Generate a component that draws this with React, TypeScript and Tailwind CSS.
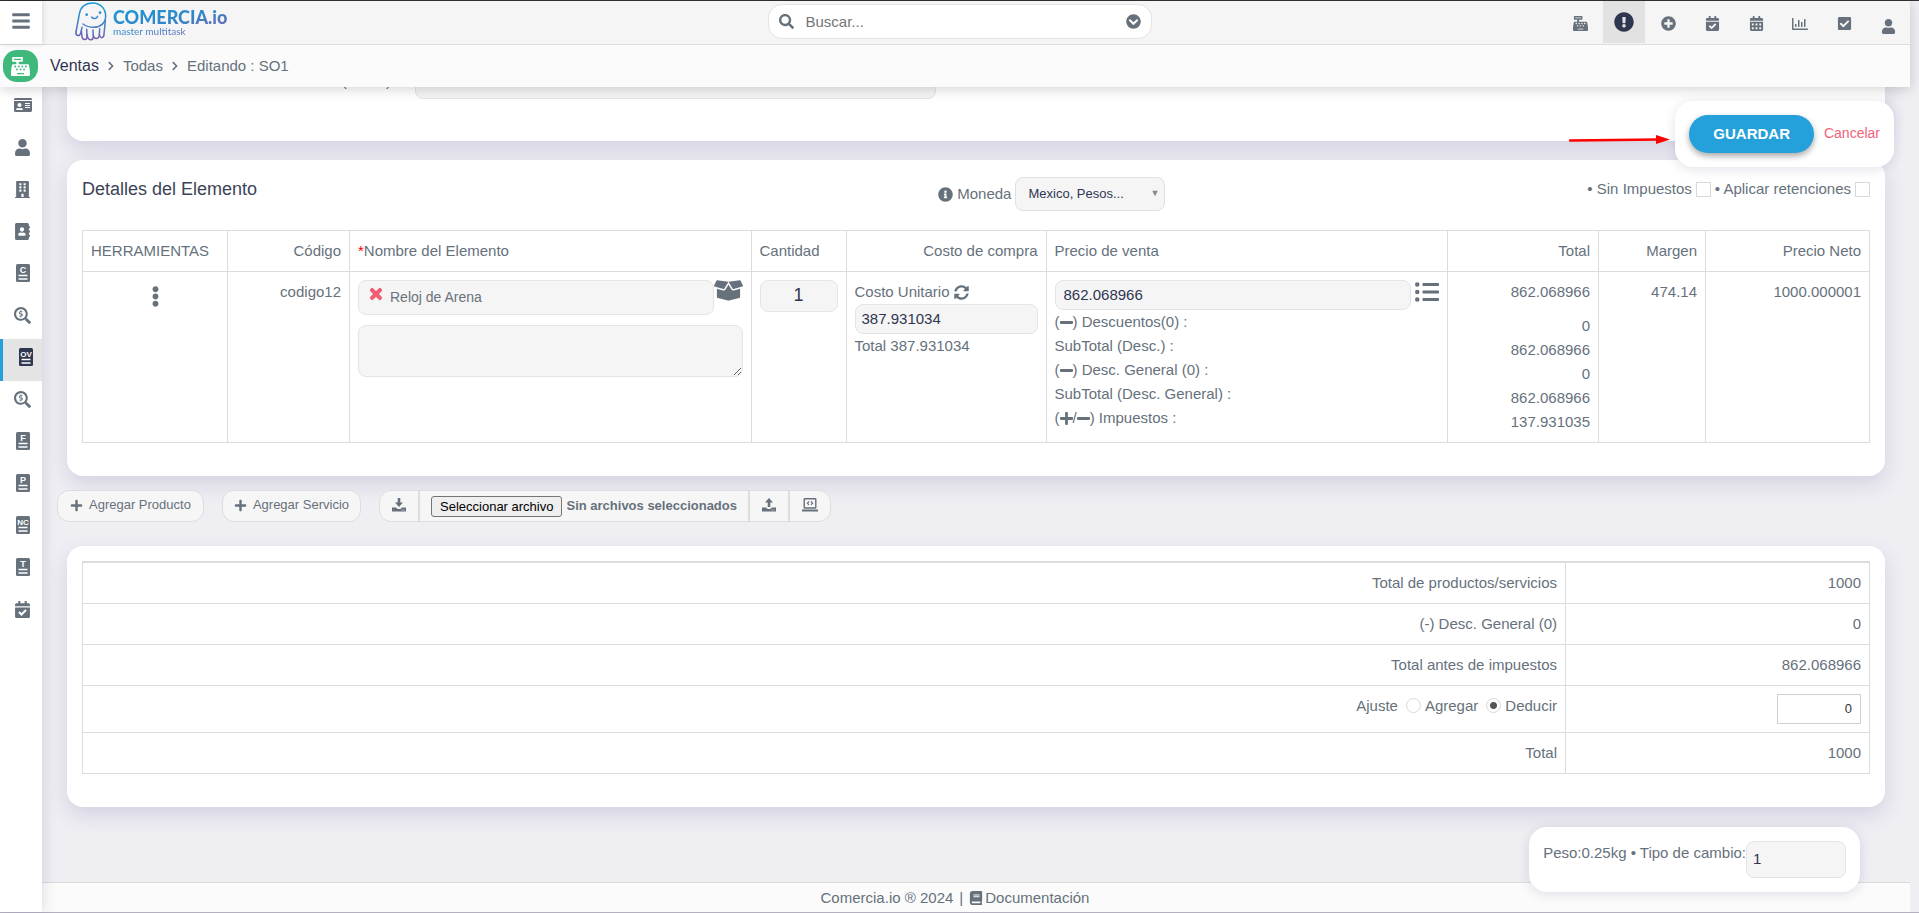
import React from "react";
import {
  FaAddressBook,
  FaBars,
  FaBook,
  FaBoxOpen,
  FaBuilding,
  FaCalendarAlt,
  FaCalendarCheck,
  FaCashRegister,
  FaCheckSquare,
  FaChevronCircleDown,
  FaChevronRight,
  FaEllipsisV,
  FaExclamationCircle,
  FaIdCard,
  FaInfoCircle,
  FaListUl,
  FaMinus,
  FaPlus,
  FaPlusCircle,
  FaRegChartBar,
  FaSearch,
  FaSearchDollar,
  FaSyncAlt,
  FaTimes,
  FaUser,
} from "react-icons/fa";

const field = "rounded-lg border border-[#e4e4e4] bg-[#f5f5f5] pb-0.5 text-[#2f3650] outline-none";
const card = "rounded-2xl bg-white shadow-[0_8px_20px_rgba(80,70,130,0.17)]";
const cell = "border border-[#dcdcdc] p-2 align-top font-normal";
const toolButton =
  "flex h-8 items-center border border-[#dddddd] bg-[#f6f6f6] text-[13px] text-[#66717c]";

const DocIcon = ({ text }: { text: string }) => (
  <svg width="14" height="18" viewBox="0 0 14 18" aria-hidden="true">
    <rect width="14" height="18" rx="1.5" fill="currentColor" />
    <text
      x="7"
      y="9"
      textAnchor="middle"
      fontFamily="Liberation Sans, Arial, sans-serif"
      fontWeight="700"
      fontSize={text.length > 1 ? 8 : 9}
      fill="#fff"
    >
      {text}
    </text>
    <path d="M2.5 11.5h9M2.5 15h9" stroke="#fff" strokeWidth="1.5" />
  </svg>
);

const TrayIcon = ({ up }: { up?: boolean }) => (
  <svg width="14" height="14" viewBox="0 0 14 14" fill="currentColor" aria-hidden="true">
    {up ? <path d="M7 0l4 4.6H8.3V9H5.7V4.6H3z" /> : <path d="M5.7 0h2.6v4.4H11L7 9 3 4.4h2.7z" />}
    <path d="M0 9.500h4.200C4.800 10.600 5.800 11 7 11s2.200-.4 2.800-1.500H14V13.500H0z" />
    <path d="M9.500 12h1M11.500 12h1" stroke="#fff" strokeWidth="0.800" />
  </svg>
);

const LaptopIcon = () => (
  <svg width="16" height="14" viewBox="0 0 16 14" fill="none" stroke="currentColor" aria-hidden="true">
    <rect x="2.200" y="0.800" width="11.600" height="9.200" rx="0.500" strokeWidth="1.400" />
    <path d="M7 3.500L5.400 5.200 7 6.900M9 3.500l1.600 1.700L9 6.900" strokeWidth="1.200" />
    <path d="M0 12.500h16" strokeWidth="2" />
  </svg>
);

const Logo = () => (
  <a href="#" className="mb-0.5 ml-8 flex items-center gap-1.5" aria-label="Comercia.io">
    <svg width="33" height="41" viewBox="41 5 99 123" fill="none" aria-hidden="true">
      <defs>
        <linearGradient id="ink" x1="0" y1="5" x2="0" y2="125" gradientUnits="userSpaceOnUse">
          <stop offset="0" stopColor="#12a0dc" />
          <stop offset="0.5" stopColor="#3a86cc" />
          <stop offset="1" stopColor="#7a5db0" />
        </linearGradient>
      </defs>
      <g stroke="url(#ink)" strokeWidth="4.500" strokeLinecap="round" strokeLinejoin="round">
        <path d="M47 98L57 44C61 22 76 11 97 11c23 0 39 17 39 39 0 22-16 34-36 34-14 0-24-4-32-10" />
        <path d="M47 98c-2 12 11 14 14 4l4-18" />
        <path d="M63 94l2 18c2 12 15 11 15 0l-1-22" />
        <path d="M80 106l3 10c4 8 15 8 16-4l-1-20" />
        <path d="M99 108c3 14 15 12 18 0l1-20" />
        <path d="M117 106c4 14 14 10 14-2l4-40" />
        <path d="M94 53c5 7 15 6 18-2" />
      </g>
      <circle cx="79" cy="46" r="4" fill="#2a8fd2" />
      <circle cx="119" cy="40" r="4" fill="#2a8fd2" />
    </svg>
    <span className="flex flex-col bg-linear-to-br from-[#0f9ad8] via-[#2f85c8] to-[#7558ae] bg-clip-text font-[Lato,sans-serif] text-transparent">
      <span className="text-[18px] leading-[18px] font-black">COMERCIA.io</span>
      <span className="text-[10px] leading-2.5">master multitask</span>
    </span>
  </a>
);

const topLinks = [
  { label: "Punto de venta", icon: <FaCashRegister size={15} /> },
  { label: "Avisos", icon: <FaExclamationCircle size={20} />, active: true },
  { label: "Nuevo", icon: <FaPlusCircle size={15} /> },
  { label: "Agenda", icon: <FaCalendarCheck size={15} /> },
  { label: "Calendario", icon: <FaCalendarAlt size={15} /> },
  { label: "Reportes", icon: <FaRegChartBar size={16} /> },
  { label: "Tareas", icon: <FaCheckSquare size={15} /> },
  { label: "Usuario", icon: <FaUser size={15} className="mt-1.5" /> },
];

const sideLinks = [
  { label: "Tarjetas", icon: <FaIdCard size={18} /> },
  { label: "Usuarios", icon: <FaUser size={17} /> },
  { label: "Empresas", icon: <FaBuilding size={17} /> },
  { label: "Contactos", icon: <FaAddressBook size={17} /> },
  { label: "Cotizaciones", icon: <DocIcon text="C" /> },
  { label: "Buscar cotización", icon: <FaSearchDollar size={17} /> },
  { label: "Ventas", icon: <DocIcon text="OV" />, active: true },
  { label: "Buscar venta", icon: <FaSearchDollar size={17} /> },
  { label: "Facturas", icon: <DocIcon text="F" /> },
  { label: "Pagos", icon: <DocIcon text="P" /> },
  { label: "Notas", icon: <DocIcon text="NC" /> },
  { label: "Tickets", icon: <DocIcon text="T" /> },
  { label: "Agenda", icon: <FaCalendarCheck size={17} /> },
];

const Header = () => (
  <header className="relative z-20 bg-[#fbfbfb] shadow-[0_2px_12px_rgba(0,0,0,0.18)]">
    <div className="flex h-11 items-center border-b border-[#dddddd] bg-[#f5f5f5]">
      <button
        aria-label="Menú"
        className="flex w-[42px] items-center justify-center self-stretch bg-white pb-1 shadow-[1px_0_5px_rgba(0,0,0,0.12)]"
      >
        <FaBars size={20} />
      </button>
      <div className="flex flex-22">
        <Logo />
      </div>
      <label className="mb-0.5 flex h-[35px] w-96 items-center gap-3 rounded-[14px] border border-[#e4e4e4] bg-white px-2.5">
        <FaSearch size={15} />
        <input
          type="text"
          aria-label="Buscar"
          placeholder="Buscar..."
          className="min-w-0 flex-1 text-[15px] outline-none placeholder:text-[#757575]"
        />
        <FaChevronCircleDown size={15} />
      </label>
      <nav className="flex flex-23 justify-end self-stretch">
        {topLinks.map((link) => (
          <a
            key={link.label}
            href="#"
            aria-label={link.label}
            className={
              link.active
                ? "mx-px mb-px flex w-[42px] items-center justify-center bg-[#e2e2e2] text-[#2f3650]"
                : "mx-px flex w-[42px] items-center justify-center pt-0.5"
            }
          >
            {link.icon}
          </a>
        ))}
      </nav>
    </div>
    <nav className="flex h-[42px] items-center pl-[3px]">
      <span className="flex h-8 w-[35px] items-center justify-center rounded-[14px] bg-[#3fb97b] text-white">
        <FaCashRegister size={19} />
      </span>
      <a href="#" className="ml-3 text-[16px] text-[#2f3650]">
        Ventas
      </a>
      <FaChevronRight size={10} className="mx-[7px]" />
      <a href="#">Todas</a>
      <FaChevronRight size={10} className="mx-[7px]" />
      <span>Editando : SO1</span>
    </nav>
  </header>
);

const SaveBox = () => (
  <div className="absolute top-[100px] right-[25px] z-30 flex h-[66px] items-center gap-2.5 rounded-[18px] bg-white px-3.5 shadow-[0_2px_12px_rgba(60,50,100,0.15)]">
    <button className="h-[38px] rounded-full bg-[#24a0db] px-6 text-[15px] font-bold text-white shadow-[0_3px_6px_rgba(0,0,0,0.35)]">
      GUARDAR
    </button>
    <a href="#" className="pb-0.5 text-[14px] text-[#f0637c]">
      Cancelar
    </a>
    <svg
      className="absolute top-8 -left-[106px]"
      width="102"
      height="12"
      viewBox="0 0 102 12"
      aria-hidden="true"
    >
      <path d="M1 7.500L90 6.500" stroke="#f00" strokeWidth="2.500" strokeLinecap="round" />
      <path d="M87 2l14 4.500L87 11z" fill="#f00" />
    </svg>
  </div>
);

const Minus = () => <FaMinus className="h-[15px] w-[13px]" />;

const ItemsTable = () => (
  <table className="w-full table-fixed border-collapse">
    <colgroup>
      <col className="w-[145px]" />
      <col className="w-[122px]" />
      <col />
      <col className="w-[95px]" />
      <col className="w-[200px]" />
      <col />
      <col className="w-[151px]" />
      <col className="w-[107px]" />
      <col className="w-[164px]" />
    </colgroup>
    <thead>
      <tr>
        <th className={`${cell} text-left`}>HERRAMIENTAS</th>
        <th className={`${cell} text-right`}>Código</th>
        <th className={`${cell} text-left`}>
          <span className="text-[#ff0000]">*</span>Nombre del Elemento
        </th>
        <th className={`${cell} text-left`}>Cantidad</th>
        <th className={`${cell} text-right`}>Costo de compra</th>
        <th className={`${cell} text-left`}>Precio de venta</th>
        <th className={`${cell} text-right`}>Total</th>
        <th className={`${cell} text-right`}>Margen</th>
        <th className={`${cell} text-right`}>Precio Neto</th>
      </tr>
    </thead>
    <tbody>
      <tr>
        <td className={cell}>
          <button aria-label="Opciones" className="mx-auto block pt-1.5">
            <FaEllipsisV size={21} />
          </button>
        </td>
        <td className={`${cell} text-right`}>codigo12</td>
        <td className={cell}>
          <div className="flex items-start">
            <div className="relative flex-1">
              <input
                aria-label="Nombre del Elemento"
                defaultValue="Reloj de Arena"
                className="block h-[35px] w-full rounded-lg border border-[#e4e4e4] bg-[#f5f5f5] pb-0.5 pl-[31px] text-[14px] text-[#6a727c] outline-none"
              />
              <button aria-label="Quitar" className="absolute top-1.5 left-2.5 text-[#f25c74]">
                <FaTimes size={16} stroke="currentColor" strokeWidth={36} />
              </button>
            </div>
            <button aria-label="Inventario">
              <FaBoxOpen size={29} className="-my-1" />
            </button>
          </div>
          <textarea aria-label="Descripción" className={`${field} mt-2.5 block h-[52px] w-full`} />
        </td>
        <td className={cell}>
          <input
            aria-label="Cantidad"
            defaultValue="1"
            className={`${field} block h-8 w-full text-center text-[18px]`}
          />
        </td>
        <td className={cell}>
          <div className="flex items-center gap-1">
            <label htmlFor="costo">Costo Unitario</label>
            <button aria-label="Actualizar costo">
              <FaSyncAlt size={15} />
            </button>
          </div>
          <input id="costo" defaultValue="387.931034" className={`${field} block h-[30px] w-full px-1.5`} />
          <div>Total 387.931034</div>
        </td>
        <td className={cell}>
          <div className="flex items-start gap-1">
            <input
              aria-label="Precio de venta"
              defaultValue="862.068966"
              className={`${field} block h-[30px] min-w-0 flex-1 px-2`}
            />
            <button aria-label="Lista de precios">
              <FaListUl size={24} />
            </button>
          </div>
          <div className="flex items-center">
            (<Minus />) Descuentos(0) :
          </div>
          <div>SubTotal (Desc.) :</div>
          <div className="flex items-center">
            (<Minus />) Desc. General (0) :
          </div>
          <div>SubTotal (Desc. General) :</div>
          <div className="flex items-center">
            (<FaPlus className="h-[15px] w-[13px]" />/<Minus />) Impuestos :
          </div>
        </td>
        <td className={`${cell} text-right`}>
          <div className="mb-2.5">862.068966</div>
          <div>0</div>
          <div>862.068966</div>
          <div>0</div>
          <div>862.068966</div>
          <div>137.931035</div>
        </td>
        <td className={`${cell} text-right`}>474.14</td>
        <td className={`${cell} text-right`}>1000.000001</td>
      </tr>
    </tbody>
  </table>
);

const checkbox = "size-[15px] appearance-none border border-[#d9d9d9] bg-white checked:bg-[#24a0db]";
const radio =
  "mb-0.5 size-[15px] appearance-none rounded-full border border-[#d9d9d9] bg-white checked:bg-[radial-gradient(#555_0_3px,#fff_4px)]";

const TotalsTable = () => (
  <table className="w-full border-collapse border-t-2 border-[#dcdcdc] text-right">
    <tbody>
      <tr>
        <th className={cell}>Total de productos/servicios</th>
        <td className={`${cell} w-[304px]`}>1000</td>
      </tr>
      <tr>
        <th className={cell}>(-) Desc. General (0)</th>
        <td className={cell}>0</td>
      </tr>
      <tr>
        <th className={cell}>Total antes de impuestos</th>
        <td className={cell}>862.068966</td>
      </tr>
      <tr>
        <th className={cell}>
          <div className="flex items-center justify-end">
            <span className="mr-2">Ajuste</span>
            <label className="mr-2 flex items-center gap-1">
              <input type="radio" name="ajuste" className={radio} />
              Agregar
            </label>
            <label className="flex items-center gap-1">
              <input type="radio" name="ajuste" defaultChecked className={radio} />
              Deducir
            </label>
          </div>
        </th>
        <td className={cell}>
          <input
            aria-label="Ajuste"
            defaultValue="0"
            className="ml-auto block h-[30px] w-[84px] border border-[#cfcfcf] bg-white px-2 pb-0.5 text-right text-[13px] text-[#333] outline-none"
          />
        </td>
      </tr>
      <tr>
        <th className={cell}>Total</th>
        <td className={cell}>1000</td>
      </tr>
    </tbody>
  </table>
);

const App = () => {
  return (
    <div className="relative flex min-h-screen flex-col border-t border-b border-t-[#333036] border-b-[#b5afc0] bg-[#efeef3] pr-[9px] font-['Liberation_Sans',Arial,sans-serif] text-[15px] leading-6 text-[#66717c]">
      <Header />
      <SaveBox />

      <div className="flex flex-1">
        <aside className="relative z-10 w-[42px] shrink-0 bg-white shadow-[2px_0_12px_rgba(60,50,100,0.15)]">
          {sideLinks.map((link, i) => (
            <a
              key={i}
              href="#"
              aria-label={link.label}
              className={
                link.active
                  ? "flex h-[42px] items-center justify-center border-l-3 border-[#24a0db] bg-[#e4e4e4] pb-1.5 pl-1.5 text-[#2f3650]"
                  : "flex h-[42px] items-center justify-center pb-1.5 pl-[3px]"
              }
            >
              {link.icon}
            </a>
          ))}
        </aside>

        <div className="flex min-w-0 flex-1 flex-col">
          <main className="flex-1 px-[25px]">
            <section className={`${card} -mt-6 flex items-center pb-[42px]`}>
              <label htmlFor="notas" className="w-[348px] pr-6 text-right">
                Observaciones (Notas)
              </label>
              <input id="notas" className={`${field} h-9 w-[521px]`} />
            </section>

            <section className={`${card} mt-[19px] px-[15px] pt-[17px] pb-[33px]`}>
              <div className="mb-[19px] flex items-start">
                <h2 className="w-[48%] text-[18px] leading-6 text-[#3c4358]">Detalles del Elemento</h2>
                <div className="-ml-0.5 flex items-center">
                  <FaInfoCircle size={15} />
                  <label htmlFor="moneda" className="mr-1 ml-1">
                    Moneda
                  </label>
                  <div className="relative">
                    <select
                      id="moneda"
                      className="h-[34px] w-[150px] appearance-none rounded-lg border border-[#e0e0e0] bg-[#f5f5f5] px-3 text-[13px] text-[#2f3650]"
                    >
                      <option>Mexico, Pesos...</option>
                    </select>
                    <span className="pointer-events-none absolute top-1 right-1.5 text-[9px] text-[#888]">▼</span>
                  </div>
                </div>
                <div className="ml-auto flex items-center gap-1">
                  <label className="flex items-center gap-1">
                    • Sin Impuestos
                    <input type="checkbox" className={checkbox} />
                  </label>
                  <label className="flex items-center gap-1">
                    • Aplicar retenciones
                    <input type="checkbox" className={checkbox} />
                  </label>
                </div>
              </div>
              <ItemsTable />
            </section>

            <div className="mt-3.5 -ml-2.5 flex gap-[18px]">
              <button className={`${toolButton} gap-1.5 rounded-xl px-3 pb-0.5`}>
                <FaPlus size={13} />
                Agregar Producto
              </button>
              <button className={`${toolButton} gap-1.5 rounded-xl px-[11px] pb-0.5`}>
                <FaPlus size={13} />
                Agregar Servicio
              </button>
              <div className="flex">
                <button aria-label="Descargar" className={`${toolButton} rounded-l-xl px-3 pb-0.5`}>
                  <TrayIcon />
                </button>
                <label className={`${toolButton} gap-1 px-[11px] font-bold`}>
                  <input type="file" className="sr-only" />
                  <span className="rounded-[3px] border border-[#767676] bg-[#efefef] px-2 leading-[19px] font-normal text-black">
                    Seleccionar archivo
                  </span>
                  Sin archivos seleccionados
                </label>
                <button aria-label="Subir" className={`${toolButton} px-3 pb-0.5`}>
                  <TrayIcon up />
                </button>
                <button aria-label="Equipo" className={`${toolButton} rounded-r-xl px-3 pb-0.5`}>
                  <LaptopIcon />
                </button>
              </div>
            </div>

            <section className={`${card} mt-6 px-[15px] pt-[15px] pb-[33px]`}>
              <TotalsTable />
            </section>
          </main>

          <footer className="flex h-[30px] items-center justify-center gap-1.5 border-t border-[#dcdcdc] bg-[#fbfbfb] pr-[42px]">
            <span>Comercia.io ® 2024</span>
            <span>|</span>
            <a href="#" className="flex items-center gap-0.5">
              <FaBook size={14} />
              Documentación
            </a>
          </footer>
        </div>
      </div>

      <div className="absolute right-[59px] bottom-5 z-20 flex rounded-[18px] bg-white p-3.5 shadow-[0_2px_12px_rgba(60,50,100,0.15)]">
        <label htmlFor="cambio">Peso:0.25kg • Tipo de cambio:</label>
        <input id="cambio" defaultValue="1" className={`${field} h-[37px] w-[100px] px-1.5`} />
      </div>
    </div>
  );
};

export default App;
